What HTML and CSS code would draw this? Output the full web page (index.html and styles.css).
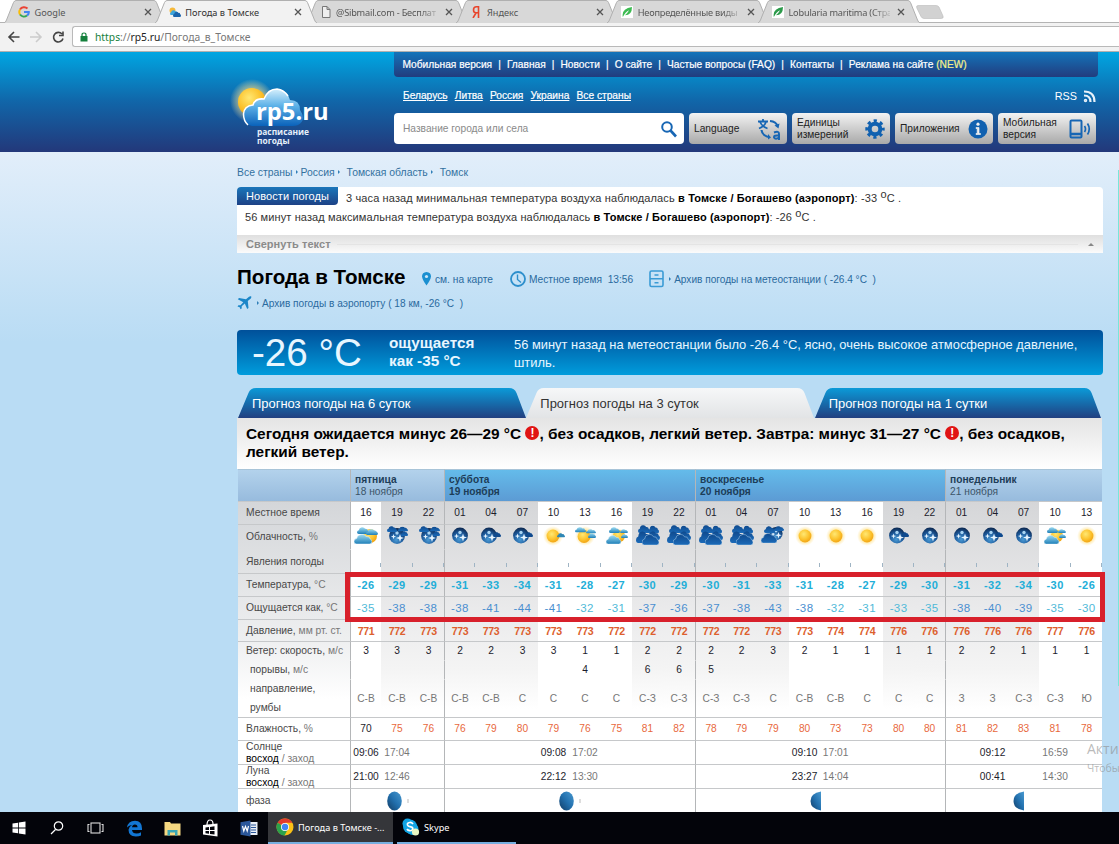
FILE: index.html
```html
<!DOCTYPE html>
<html lang="ru">
<head>
    <meta charset="UTF-8">
    <meta name="viewport" content="width=device-width, initial-scale=1.0">
    <title>Погода в Томске</title>
    <link rel="stylesheet" href="styles.css">
</head>
<body>

<!-- shared icon shapes -->
<svg class="defs" width="0" height="0">
    <defs>
        <radialGradient id="gSun" cx="0.4" cy="0.35" r="0.7"><stop offset="0" stop-color="#ffe873"/><stop offset="0.6" stop-color="#fcc22c"/><stop offset="1" stop-color="#f0a012"/></radialGradient>
        <radialGradient id="gHalo"><stop offset="0.55" stop-color="#ffdf80" stop-opacity="0.9"/><stop offset="1" stop-color="#ffe9a8" stop-opacity="0"/></radialGradient>
        <radialGradient id="gMoon" cx="0.45" cy="0.75" r="0.75"><stop offset="0" stop-color="#4a9ad4"/><stop offset="0.55" stop-color="#1d5a9c"/><stop offset="1" stop-color="#0c2850"/></radialGradient>
        <linearGradient id="gDay" x1="0" y1="0" x2="0" y2="1"><stop offset="0" stop-color="#9edcf2"/><stop offset="1" stop-color="#1f7fb8"/></linearGradient>
        <linearGradient id="gNight" x1="0" y1="0" x2="0" y2="1"><stop offset="0" stop-color="#0f4a8e"/><stop offset="1" stop-color="#1b6ab8"/></linearGradient>
        <linearGradient id="gPhase" x1="1" y1="0" x2="0" y2="1"><stop offset="0" stop-color="#4a9ad0"/><stop offset="0.5" stop-color="#2270ae"/><stop offset="1" stop-color="#123c64"/></linearGradient>
        <linearGradient id="gTab" x1="0" y1="0" x2="0" y2="1"><stop offset="0" stop-color="#0b9ad8"/><stop offset="1" stop-color="#213f80"/></linearGradient>
        <linearGradient id="gTabOn" x1="0" y1="0" x2="0" y2="1"><stop offset="0" stop-color="#f6f7f8"/><stop offset="1" stop-color="#e2e4e6"/></linearGradient>
    </defs>
    <symbol id="puff" viewBox="0 0 20 12" preserveAspectRatio="none"><path d="M3 12Q0 12 0 9Q0 6 3 5.500Q3.500 1 8 0.500Q12 0 13.500 3Q17.500 2.500 18 6Q20 7 20 9Q20 12 17 12Z"/></symbol>
    <symbol id="sun" viewBox="0 0 26 24"><circle cx="13" cy="12" r="10" fill="url(#gHalo)"/><circle cx="13" cy="12" r="6.400" fill="url(#gSun)"/></symbol>
    <symbol id="sun1" viewBox="0 0 26 24"><circle cx="12" cy="12" r="10" fill="url(#gHalo)"/><circle cx="12" cy="12" r="6.400" fill="url(#gSun)"/><use href="#puff" x="16" y="9" width="8" height="4.500" fill="#2f86b4"/></symbol>
    <symbol id="sun2" viewBox="0 0 26 24"><circle cx="13" cy="12" r="10" fill="url(#gHalo)"/><circle cx="12" cy="12.500" r="6.400" fill="url(#gSun)"/><use href="#puff" x="3" y="3" width="11" height="5.500" fill="url(#gDay)"/><use href="#puff" x="14" y="5" width="10" height="4.500" fill="url(#gDay)"/><use href="#puff" x="16" y="9" width="8" height="5" fill="url(#gDay)"/></symbol>
    <symbol id="sun3" viewBox="0 0 26 24"><circle cx="14" cy="12" r="8" fill="url(#gHalo)"/><circle cx="15" cy="12" r="6" fill="url(#gSun)"/><use href="#puff" x="5" y="3" width="11" height="6" fill="url(#gDay)"/><use href="#puff" x="16" y="5" width="8" height="4" fill="url(#gDay)"/><use href="#puff" x="17" y="10" width="7" height="4" fill="url(#gDay)"/><use href="#puff" x="2" y="11" width="15" height="9" fill="url(#gDay)" stroke="#e9f6fc" stroke-width="0.500"/></symbol>
    <symbol id="sun4" viewBox="0 0 26 24"><circle cx="17" cy="12" r="7" fill="url(#gSun)"/><use href="#puff" x="4" y="3" width="12" height="7" fill="url(#gDay)"/><use href="#puff" x="13" y="5" width="12" height="6" fill="url(#gDay)"/><use href="#puff" x="1" y="10" width="18" height="10" fill="url(#gDay)" stroke="#e9f6fc" stroke-width="0.600"/></symbol>
    <symbol id="moon" viewBox="0 0 26 24"><circle cx="13" cy="11.500" r="7.900" fill="url(#gMoon)"/><circle cx="13" cy="8.500" r="1.700" fill="#a9d4f2"/><path d="M16 9.500l1 3 3 1-3 1-1 3-1-3-3-1 3-1zM9.500 9.500l.7 1.900 1.900.7-1.900.7-.7 1.900-.7-1.900-1.900-.7 1.900-.7z" fill="#e8f5ff"/></symbol>
    <symbol id="moon1" viewBox="0 0 26 24"><use href="#moon" x="-2" width="26" height="24"/><use href="#puff" x="15.500" y="8" width="7.500" height="5" fill="#0f4a8e"/></symbol>
    <symbol id="moon3" viewBox="0 0 26 24"><use href="#moon" y="0.500" width="26" height="24"/><use href="#puff" x="3" y="2" width="10" height="6" fill="url(#gNight)"/><use href="#puff" x="14" y="2.500" width="10" height="5" fill="url(#gNight)"/><use href="#puff" x="17" y="7" width="7" height="5" fill="url(#gNight)"/></symbol>
    <symbol id="dark" viewBox="0 0 26 24"><g fill="url(#gNight)"><use href="#puff" x="3" y="1" width="12" height="8"/><use href="#puff" x="13" y="1.500" width="11" height="8"/><use href="#puff" x="12" y="7" width="13" height="9"/><use href="#puff" x="1" y="7" width="15" height="12"/><use href="#puff" x="7" y="10" width="17" height="11" stroke="#a9cdea" stroke-width="0.600"/></g></symbol>
    <symbol id="dark1" viewBox="0 0 26 24"><use href="#moon" x="5" width="22" height="20"/><g fill="url(#gNight)"><use href="#puff" x="4" y="2" width="11" height="7"/><use href="#puff" x="14" y="2" width="10" height="5"/><use href="#puff" x="1" y="9" width="16" height="10" stroke="#a9cdea" stroke-width="0.500"/></g></symbol>
    <symbol id="full" viewBox="0 0 28 20"><ellipse cx="10.500" cy="10" rx="7.300" ry="9.500" fill="url(#gPhase)"/><path d="M24 8v4" stroke="#aaa" stroke-width="0.800"/></symbol>
    <symbol id="half" viewBox="0 0 28 20"><path d="M14 0.500Q3.500 2 3.500 10Q3.500 18 14 19.500Z" fill="url(#gPhase)"/></symbol>
    <symbol id="leaf" viewBox="0 0 12 12"><path d="M1 12Q-1 2 12 0Q12 10 3.500 10Q7 7 8.500 4Q4 6 1 12Z"/></symbol>
    <symbol id="tab" viewBox="0 0 289 30" preserveAspectRatio="none"><path d="M0 30L10.500 5Q12.500 0 18 0H272Q277.500 0 279.500 5L289 30Z"/></symbol>
    <symbol id="ctab" viewBox="0 0 162 23" preserveAspectRatio="none"><path d="M0 23Q1.500 22.500 2.500 20L9.500 2.500Q10.500 .5 12 .5H150Q151.500 .5 152.500 2.500L159.500 20Q160.500 22.500 162 23" stroke="#b0b0b0"/></symbol>
    <symbol id="close" viewBox="0 0 8 8"><path d="M1 1l6 6M7 1L1 7" stroke="#555" stroke-width="1.300"/></symbol>
</svg>

<div class="tabstrip">
    <div class="ctab">
        <svg class="ctab-bg"><use href="#ctab"/></svg>
        <svg class="fav" viewBox="0 0 12 12" fill="none" stroke-width="2"><path d="M9.500 2.500A5 5 0 0 0 2 3.500" stroke="#ea4335"/><path d="M2 3.500A5 5 0 0 0 2 8.500" stroke="#fbbc05"/><path d="M2 8.500A5 5 0 0 0 9 9.500" stroke="#34a853"/><path d="M9 9.500Q11 8 10.800 6H6" stroke="#4285f4"/></svg>
        <span>Google</span><svg class="x"><use href="#close"/></svg>
    </div>
    <div class="ctab on">
        <svg class="ctab-bg"><use href="#ctab"/></svg>
        <svg class="fav" viewBox="0 0 12 12"><circle cx="3.500" cy="4.500" r="3" fill="#f6b93a"/><use href="#puff" x="1" y="4" width="8" height="5" fill="#3da5dc"/><use href="#puff" x="4" y="5.500" width="8" height="5.500" fill="#1a64ac"/></svg>
        <span>Погода в Томске</span><svg class="x"><use href="#close"/></svg>
    </div>
    <div class="ctab">
        <svg class="ctab-bg"><use href="#ctab"/></svg>
        <svg class="fav" viewBox="0 0 12 12"><path d="M2.500 .5H7L10 3.500V11.500H2.500ZM7 .5V3.500H10" fill="#eee" stroke="#777"/></svg>
        <span class="fade">@Sibmail.com - Бесплат</span><svg class="x"><use href="#close"/></svg>
    </div>
    <div class="ctab">
        <svg class="ctab-bg"><use href="#ctab"/></svg>
        <svg class="fav" viewBox="0 0 12 12"><path d="M8.500 12V.8H6.500Q3.500 .8 3.500 4Q3.500 6.800 6 6.800H8.500M6 7L3 12" fill="none" stroke="#e8452c" stroke-width="1.600"/></svg>
        <span>Яндекс</span><svg class="x"><use href="#close"/></svg>
    </div>
    <div class="ctab">
        <svg class="ctab-bg"><use href="#ctab"/></svg>
        <svg class="fav leaf" viewBox="0 0 12 12"><use href="#leaf" fill="#3dbb52" x="1" y="1" width="10" height="10"/></svg>
        <span class="fade">Неопределённые виды</span><svg class="x"><use href="#close"/></svg>
    </div>
    <div class="ctab">
        <svg class="ctab-bg"><use href="#ctab"/></svg>
        <svg class="fav leaf" viewBox="0 0 12 12"><use href="#leaf" fill="#2c9a4a" x="1" y="1" width="10" height="10"/></svg>
        <span class="fade">Lobularia maritima (Стра</span><svg class="x"><use href="#close"/></svg>
    </div>
    <svg class="newtab" viewBox="0 0 28 14"><path d="M2 .5H20Q22 .5 23 2L27 11Q28 13.500 25 13.500H8Q6 13.500 5 11.500L.8 3Q0 .5 2 .5Z" fill="#d2d2d2" stroke="#bbb" stroke-width="0.600"/></svg>
</div>

<div class="toolbar">
    <svg width="64" height="16" viewBox="0 0 64 16" fill="none" stroke-width="1.600"><path d="M13.500 8H3M8 3L3 8l5 5" stroke="#444"/><path d="M24 8h10.500M30 3l5 5-5 5" stroke="#ccc"/><path d="M56 5A4.800 4.800 0 1 0 57 9.500M57 2.500V6.500H53" stroke="#444"/></svg>
    <div class="address">
        <svg width="8" height="10" viewBox="0 0 8 10"><rect x="0.500" y="4" width="7" height="5.500" fill="#15803c"/><path d="M2 4.500V2.800Q2 1 4 1Q6 1 6 2.800V4.500" fill="none" stroke="#15803c" stroke-width="1.200"/></svg>
        <span><i class="secure">https</i>://<i class="host">rp5.ru</i>/Погода_в_Томске</span>
    </div>
</div>

<div class="site">
    <header class="header">
        <a class="logo">
            <svg width="104" height="74" viewBox="0 0 104 74">
                <defs>
                    <linearGradient id="gLogo" x1="0" y1="0" x2="0" y2="1"><stop offset="0" stop-color="#d5effc"/><stop offset="0.450" stop-color="#5eb2e8"/><stop offset="1" stop-color="#0a62ba"/></linearGradient>
                </defs>
                <circle cx="22" cy="23" r="22" fill="url(#gHalo)" opacity="0.700"/>
                <circle cx="22" cy="24" r="14" fill="url(#gSun)"/>
                <path d="M22 48Q14 46 13.500 37Q14 28 23 27Q25 20 34 21Q38 11 47 11Q57 12 60 22Q70 22 70 32Q77 42 68 47Q66 48 62 48Z" fill="url(#gLogo)"/>
                <path d="M18 47Q13.500 43 13.500 36Q14 28 23 27Q25 20 34 21Q38 11 47 11Q54 12 58 18" fill="none" stroke="#fff" stroke-width="1.500"/>
                <text x="26" y="42" class="logo-name">rp5.ru</text>
                <text x="27" y="57" class="logo-sub">расписание</text>
                <text x="27" y="66" class="logo-sub">погоды</text>
            </svg>
        </a>
        <div class="head-right">
            <nav class="topnav">
                <a>Мобильная версия</a><b>|</b><a>Главная</a><b>|</b><a>Новости</a><b>|</b><a>О сайте</a><b>|</b><a>Частые вопросы (FAQ)</a><b>|</b><a>Контакты</a><b>|</b><a>Реклама на сайте <em>(NEW)</em></a>
            </nav>
            <div class="countries">
                <a>Беларусь</a><a>Литва</a><a>Россия</a><a>Украина</a><a>Все страны</a>
                <div class="rss">RSS <svg width="13" height="13" viewBox="0 0 13 13" fill="none" stroke="#e9f2fa" stroke-width="2.200"><path d="M1 1.500Q11.500 1.500 11.500 12M1 5.500Q7.500 5.500 7.500 12"/><circle cx="2.500" cy="10.500" r="1" stroke-width="1.500"/></svg></div>
            </div>
            <div class="tools">
                <div class="search">
                    <span>Название города или села</span>
                    <svg width="18" height="18" viewBox="0 0 18 18" fill="none" stroke="#1766b4"><circle cx="7" cy="7" r="4.800" stroke-width="2"/><path d="M10.500 10.500L16 16.500" stroke-width="2.600"/></svg>
                </div>
                <a class="tool">Language<svg width="25" height="24" viewBox="0 0 25 24" fill="none" stroke="#1766b4" stroke-width="1.800"><path d="M1 4.500H11M6 2V4.500M2 11.500Q8 9 9 5M3 5Q5 9.500 10.500 11.500"/><path d="M13 4Q19 4.500 20.500 9M4.500 13Q5 18 11 20" stroke-width="2.200"/><path d="M17.500 8.500L22.500 6.500L21.500 11.500ZM11 17V22.500L14 20.500Z" fill="#1766b4" stroke="none"/><path d="M17 15.500Q22 13.500 22 17V23M22 18.500Q16.500 18 17 20.500Q18.500 23 22 20.500" stroke-width="2"/></svg></a>
                <a class="tool">Единицы<br>измерений<svg width="20" height="20" viewBox="0 0 20 20" fill="none" stroke="#1161b0"><circle cx="10" cy="10" r="5.300" stroke-width="4"/><circle cx="10" cy="10" r="8.200" stroke-width="3" stroke-dasharray="3.200 3.240" stroke-dashoffset="1.600"/></svg></a>
                <a class="tool">Приложения<svg width="20" height="20" viewBox="0 0 20 20"><circle cx="10" cy="10" r="9.500" fill="#1161b0"/><circle cx="10" cy="5.200" r="1.600" fill="#eee"/><path d="M8 8.500H11V14.500H12.500V15.500H8V14.500H9.200V9.500H8Z" fill="#eee" stroke="#eee" stroke-width="0.700"/></svg></a>
                <a class="tool">Мобильная<br>версия<svg width="22" height="20" viewBox="0 0 22 20" fill="none" stroke="#1766b4" stroke-width="2"><rect x="1.500" y="1.500" width="11" height="17" rx="1"/><path d="M1.500 15H12.500" stroke-width="2.500"/><path d="M15.500 7Q17.500 10 15.500 13M18.500 4.500Q22 10 18.500 15.500" stroke-width="1.700"/></svg></a>
            </div>
        </div>
    </header>

    <main class="content">
        <div class="crumbs"><a>Все страны</a><i></i><a>Россия</a><i></i><a class="gap">Томская область</a><i></i><a class="gap">Томск</a></div>

        <section class="news">
            <h3>Новости погоды</h3>
            <p class="first">3 часа назад минимальная температура воздуха наблюдалась <strong>в Томске / Богашево (аэропорт)</strong>: -33 <sup>o</sup>C .</p>
            <p>56 минут назад максимальная температура воздуха наблюдалась <strong>в Томске / Богашево (аэропорт)</strong>: -26 <sup>o</sup>C .</p>
            <div class="collapse"><span>Свернуть текст</span><hr><i></i></div>
        </section>

        <div class="title-row">
            <h1>Погода в Томске</h1>
            <a class="map"><svg width="9" height="14" viewBox="0 0 9 14"><path d="M4.500 0Q9 .3 9 4.500Q8.500 8 4.500 13.500Q.5 8 0 4.500Q0 .3 4.500 0Z" fill="#1a8fd0"/><circle cx="4.500" cy="4.500" r="1.600" fill="#cde6f7"/></svg>см. на карте</a>
            <a class="time"><svg width="16" height="16" viewBox="0 0 16 16" fill="none" stroke="#2d8fcc" stroke-width="1.800"><circle cx="8" cy="8" r="7"/><path d="M7.500 3.500V8.500L11 11.500" stroke-width="1.400"/></svg>Местное время&nbsp; 13:56</a>
            <a class="archive"><svg width="15" height="18" viewBox="0 0 15 18" fill="none" stroke="#3a9bd5" stroke-width="1.600"><rect x="1" y="1" width="13" height="15.500" rx="1.500"/><path d="M1 8.700H14M5.500 5h4M5.500 12.700h4"/></svg><i></i>Архив погоды на метеостанции ( -26.4 °C&nbsp; )</a>
        </div>
        <div class="airport">
            <svg width="15" height="14" viewBox="0 0 15 14" fill="#1b86c8"><path d="M14 .3Q15 .8 13.800 2.500L10.800 5L11.500 12L10.200 13L7.800 7.500L4.700 10.200L4.700 12.500L3.500 13.200L2.700 11.200L.5 10.500L1.400 9.300L3.500 9.200L6.300 6.300L.8 3.200L2 2L9 3.200L12 .7Q13 0 14 .3Z"/></svg><i></i><a>Архив погоды в аэропорту ( 18 км, -26 °C&nbsp; )</a>
        </div>

        <section class="current">
            <div class="temp">-26 °C</div>
            <div class="feels">ощущается<br>как -35 °C</div>
            <p>56 минут назад на метеостанции было -26.4 °C, ясно, очень высокое атмосферное давление, штиль.</p>
        </section>

        <div class="ftabs">
            <div class="ftab"><svg fill="url(#gTab)"><use href="#tab"/></svg><span>Прогноз погоды на 6 суток</span></div>
            <div class="ftab on"><svg fill="url(#gTabOn)"><use href="#tab"/></svg><span>Прогноз погоды на 3 суток</span></div>
            <div class="ftab"><svg fill="url(#gTab)"><use href="#tab"/></svg><span>Прогноз погоды на 1 сутки</span></div>
        </div>
        <div class="summary">Сегодня ожидается минус 26—29 °C <b class="warn">!</b>, без осадков, легкий ветер. Завтра: минус 31—27 °C <b class="warn">!</b>, без осадков, легкий ветер.</div>

        <table class="forecast">
            <colgroup>
                <col class="label">
                <col><col class="night w"><col class="night">
                <col class="night"><col class="night w"><col class="night">
                <col><col class="w"><col>
                <col class="night"><col class="night w"><col class="night">
                <col class="night"><col class="night w"><col>
                <col><col class="w"><col class="night">
                <col class="night"><col class="night w"><col class="night">
                <col class="night"><col class="w"><col>
            </colgroup>
            <tr class="days"><th></th><td colspan="3" class="d"><b>пятница</b><br>18 ноября</td><td colspan="8" class="d weekend"><b>суббота</b><br><b>19 ноября</b></td><td colspan="8" class="d weekend"><b>воскресенье</b><br><b>20 ноября</b></td><td colspan="5" class="d"><b>понедельник</b><br>21 ноября</td></tr>
            <tr class="hours"><th>Местное время</th><td class="d">16</td><td>19</td><td>22</td><td class="d">01</td><td>04</td><td>07</td><td>10</td><td>13</td><td>16</td><td>19</td><td>22</td><td class="d">01</td><td>04</td><td>07</td><td>10</td><td>13</td><td>16</td><td>19</td><td>22</td><td class="d">01</td><td>04</td><td>07</td><td>10</td><td>13</td></tr>
            <tr class="clouds"><th>Облачность, <i>%</i></th><td class="d"><svg><use href="#sun4"/></svg></td><td><svg><use href="#moon3"/></svg></td><td><svg><use href="#moon3"/></svg></td><td class="d"><svg><use href="#moon"/></svg></td><td><svg><use href="#moon1"/></svg></td><td><svg><use href="#moon1"/></svg></td><td><svg><use href="#sun1"/></svg></td><td><svg><use href="#sun2"/></svg></td><td><svg><use href="#sun3"/></svg></td><td><svg><use href="#dark"/></svg></td><td><svg><use href="#dark"/></svg></td><td class="d"><svg><use href="#dark"/></svg></td><td><svg><use href="#dark"/></svg></td><td><svg><use href="#dark1"/></svg></td><td><svg><use href="#sun"/></svg></td><td><svg><use href="#sun"/></svg></td><td><svg><use href="#sun"/></svg></td><td><svg><use href="#moon1"/></svg></td><td><svg><use href="#moon"/></svg></td><td class="d"><svg><use href="#moon"/></svg></td><td><svg><use href="#moon1"/></svg></td><td><svg><use href="#moon"/></svg></td><td><svg><use href="#sun3"/></svg></td><td><svg><use href="#sun"/></svg></td></tr>
            <tr class="events"><th>Явления погоды</th><td class="d"></td><td></td><td></td><td class="d"></td><td></td><td></td><td></td><td></td><td></td><td></td><td></td><td class="d"></td><td></td><td></td><td></td><td></td><td></td><td></td><td></td><td class="d"></td><td></td><td></td><td></td><td></td></tr>
            <tr class="temps"><th>Температура, <i>°C</i></th><td class="d">-26</td><td>-29</td><td>-29</td><td class="d">-31</td><td>-33</td><td>-34</td><td>-31</td><td>-28</td><td>-27</td><td>-30</td><td>-29</td><td class="d">-30</td><td>-31</td><td>-33</td><td>-31</td><td>-28</td><td>-27</td><td>-29</td><td>-30</td><td class="d">-31</td><td>-32</td><td>-34</td><td>-30</td><td>-26</td></tr>
            <tr class="feel"><th>Ощущается как, <i>°C</i></th><td class="d">-35</td><td class="c">-38</td><td class="c">-38</td><td class="d c">-38</td><td class="c">-41</td><td class="c">-44</td><td class="c">-41</td><td>-32</td><td>-31</td><td class="c">-37</td><td class="c">-36</td><td class="d c">-37</td><td class="c">-38</td><td class="c">-43</td><td class="c">-38</td><td>-32</td><td>-31</td><td>-33</td><td>-35</td><td class="d c">-38</td><td class="c">-40</td><td class="c">-39</td><td>-35</td><td>-30</td></tr>
            <tr class="pressure"><th>Давление, <i>мм рт. ст.</i></th><td class="d">771</td><td>772</td><td>773</td><td class="d">773</td><td>773</td><td>773</td><td>773</td><td>773</td><td>772</td><td>772</td><td>772</td><td class="d">772</td><td>772</td><td>773</td><td>773</td><td>774</td><td>774</td><td>776</td><td>776</td><td class="d">776</td><td>776</td><td>776</td><td>777</td><td>776</td></tr>
            <tr class="wind"><th>Ветер: скорость, <i>м/с</i></th><td class="d">3</td><td>3</td><td>3</td><td class="d">2</td><td>2</td><td>3</td><td>3</td><td>1</td><td>1</td><td>2</td><td>2</td><td class="d">2</td><td>2</td><td>3</td><td>2</td><td>1</td><td>1</td><td>1</td><td>1</td><td class="d">2</td><td>2</td><td>1</td><td>1</td><td>1</td></tr>
            <tr class="wind sub"><th>порывы, <i>м/с</i></th><td class="d"></td><td></td><td></td><td class="d"></td><td></td><td></td><td></td><td>4</td><td></td><td>6</td><td>6</td><td class="d">5</td><td></td><td></td><td></td><td></td><td></td><td></td><td></td><td class="d"></td><td></td><td></td><td></td><td></td></tr>
            <tr class="dir sub"><th>направление,<br>румбы</th><td class="d">С-В</td><td>С-В</td><td>С-В</td><td class="d">С-В</td><td>С-В</td><td>С</td><td>С</td><td>С</td><td>С</td><td>С-З</td><td>С-З</td><td class="d">С-З</td><td>С-З</td><td>С</td><td>С-В</td><td>С-В</td><td>С</td><td>С</td><td>С</td><td class="d">З</td><td>З</td><td>С-З</td><td>С-З</td><td>Ю</td></tr>
            <tr class="humidity"><th>Влажность, <i>%</i></th><td class="d ok">70</td><td>75</td><td>76</td><td class="d">76</td><td>79</td><td>80</td><td>79</td><td>76</td><td>75</td><td>81</td><td>82</td><td class="d">78</td><td>79</td><td>79</td><td>80</td><td>73</td><td>73</td><td>80</td><td>80</td><td class="d">81</td><td>82</td><td>83</td><td>81</td><td>78</td></tr>
            <tr class="rise"><th>Солнце<br><b>восход</b> <i>/ заход</i></th><td class="d">09:06</td><td class="set">17:04</td><td></td><td class="d" colspan="3"></td><td>09:08</td><td class="set">17:02</td><td colspan="3"></td><td class="d" colspan="3"></td><td>09:10</td><td class="set">17:01</td><td colspan="3"></td><td class="d"></td><td>09:12</td><td></td><td class="set">16:59</td><td></td></tr>
            <tr class="rise"><th>Луна<br><b>восход</b> <i>/ заход</i></th><td class="d">21:00</td><td class="set">12:46</td><td></td><td class="d" colspan="3"></td><td>22:12</td><td class="set">13:30</td><td colspan="3"></td><td class="d" colspan="3"></td><td>23:27</td><td class="set">14:04</td><td colspan="3"></td><td class="d"></td><td>00:41</td><td></td><td class="set">14:30</td><td></td></tr>
            <tr class="phase"><th>фаза</th><td class="d" colspan="3"><svg><use href="#full"/></svg></td><td class="d" colspan="8"><svg><use href="#full"/></svg></td><td class="d" colspan="8"><svg><use href="#half"/></svg></td><td class="d" colspan="5"><svg><use href="#half"/></svg></td></tr>
        </table>
    </main>
    <div class="mark"></div>
    <div class="activate">Акти<br><small>Чтобы</small></div>
    <div class="edge"></div>
</div>

<footer class="taskbar">
    <div class="item"><svg width="14" height="14" viewBox="0 0 14 14" fill="#fff"><path d="M.5 2.500L6 1.700V6.600H.5ZM6.800 1.600L13.500.6V6.600H6.800ZM.5 7.400H6V12.300L.5 11.500ZM6.800 7.400H13.500V13.400L6.800 12.400Z"/></svg></div>
    <div class="item"><svg width="14" height="14" viewBox="0 0 14 14" fill="none" stroke="#fff" stroke-width="1.200"><circle cx="8.500" cy="5" r="4.200"/><path d="M5.500 8.500L1 13"/></svg></div>
    <div class="item"><svg width="17" height="12" viewBox="0 0 17 12" fill="none" stroke="#ddd" stroke-width="1.100"><rect x="4" y="1" width="9" height="10"/><path d="M2.500 2.500H1V9.500H2.500M14.500 2.500H16V9.500H14.500"/></svg></div>
    <div class="item"><svg width="17" height="17" viewBox="0 0 17 17"><path d="M1 7.500Q2 1 9 .8Q16 1 16 8.500V10H6Q6.500 13.500 10.500 13.500Q13 13.500 15 12.300V15.500Q13 16.600 9.800 16.600Q2.500 16 2.500 9.800Q3 6.500 6 5Q3 5.200 1 7.500ZM6 7.300H11.500Q11.500 4.500 8.900 4.500Q6.500 4.500 6 7.300Z" fill="#1276d2"/></svg></div>
    <div class="item"><svg width="17" height="15" viewBox="0 0 17 15"><path d="M.5 1H6L7 2.500H16.500V14.500H.5Z" fill="#f5d882"/><path d="M3.500 14.500V9H13.500V14.500H11V11.500H6V14.500Z" fill="#3aa7b5"/></svg></div>
    <div class="item"><svg width="17" height="18" viewBox="0 0 17 18"><path d="M1 6L15.500 4.500V17.500L1 15.500Z" fill="#fff"/><path d="M5 6Q5 1 8 1Q11 1 11 5" fill="none" stroke="#fff" stroke-width="1.200"/><path d="M3.500 8.500L7 8V11H3.500ZM8 7.900L12.500 7.300V11H8ZM3.500 12H7V14.800L3.500 14.300ZM8 12H12.500V15.500L8 15Z" fill="#05060c"/></svg></div>
    <div class="item"><svg width="18" height="17" viewBox="0 0 18 17"><rect x="8" y="2" width="9.500" height="13" fill="#e8eef6"/><path d="M11 5H16M11 7.500H16M11 10H16M11 12.500H16" stroke="#2b579a"/><path d="M.5 2.200L10.500.5V16.500L.5 14.800Z" fill="#2b579a"/><path d="M2.500 6L3.800 11L5.500 6.500L7.200 11L8.500 6" fill="none" stroke="#fff" stroke-width="1.200"/></svg></div>
    <div class="app on"><svg width="18" height="18" viewBox="0 0 18 18"><circle cx="9" cy="9" r="8.500" fill="#fbc116"/><path d="M9 9L1.600 4.700A8.500 8.500 0 0 1 16.400 4.700H9Z" fill="#e33b2e"/><path d="M9 9L1.600 4.700A8.500 8.500 0 0 0 8.500 17.500L12 11Z" fill="#2ba24c"/><circle cx="9" cy="9" r="4" fill="#fff"/><circle cx="9" cy="9" r="3.200" fill="#4285f4"/></svg><span>Погода в Томске -...</span></div>
    <div class="app skype"><svg width="18" height="18" viewBox="0 0 18 18"><circle cx="5.500" cy="5.500" r="5" fill="#12a5e5"/><circle cx="10.500" cy="11" r="6" fill="#12a5e5"/><circle cx="8" cy="8.500" r="7" fill="#12a5e5"/><path d="M11 6Q9.500 4 7.500 4.500Q5 5 5.500 7Q6 8.300 8 8.600Q11 9 10.800 11Q10 13 7.800 12.700Q5.800 12.500 5 11" fill="none" stroke="#fff" stroke-width="1.700"/><circle cx="13.500" cy="14" r="3.600" fill="#e9f7c4"/></svg><span>Skype</span></div>
</footer>

</body>
</html>
```
FILE: styles.css
```css
* {
    box-sizing: border-box;
}
body {
    margin: 0;
    width: 1119px;
    height: 844px;
    overflow: hidden;
    display: flex;
    flex-direction: column;
    background: #fff;
    font-family: "Liberation Sans", Arial, sans-serif;
    font-size: 10.2px;
    color: #333;
}
svg {
    display: block;
    flex: none;
}
i, em {
    font-style: normal;
}
.defs {
    position: absolute;
}

/* browser window */
.tabstrip {
    height: 23px;
    flex: none;
    display: flex;
    padding-left: 4px;
    border-bottom: 1px solid #b4b4b4;
    font-family: "Noto Sans", "Open Sans", sans-serif;
    font-size: 9.2px;
    color: #555;
}
.ctab {
    position: relative;
    width: 150.8px;
    height: 23px;
    display: flex;
    align-items: center;
    padding: 1px 0 0 14px;
}
.ctab-bg {
    position: absolute;
    left: 0;
    top: 0;
    width: 162px;
    height: 23px;
    fill: #d8d8d8;
}
.ctab.on {
    z-index: 1;
    color: #333;
}
.ctab.on .ctab-bg {
    fill: #f2f2f2;
}
.fav {
    position: relative;
    width: 12px;
    height: 12px;
}
.leaf {
    background: #fff;
}
.ctab span {
    position: relative;
    width: 102px;
    margin-left: 4.5px;
    white-space: nowrap;
}
.ctab .fade {
    letter-spacing: -0.2px;
    -webkit-mask-image: linear-gradient(90deg, #000 82%, rgba(0, 0, 0, 0.2));
    mask-image: linear-gradient(90deg, #000 82%, rgba(0, 0, 0, 0.2));
}
.x {
    position: relative;
    width: 8px;
    height: 8px;
    margin-left: 7px;
}
.newtab {
    width: 28px;
    height: 14px;
    margin: 5px 0 0 7px;
}
.toolbar {
    height: 29px;
    flex: none;
    display: flex;
    align-items: center;
    padding: 0 0 1px 6px;
    background: #f2f2f2;
    border-bottom: 1px solid #b0b0b0;
}
.address {
    flex: 1;
    height: 21px;
    margin-left: 2px;
    padding-left: 7px;
    display: flex;
    align-items: center;
    gap: 7px;
    background: #fff;
    border: 1px solid #b9b9b9;
    border-right: 0;
    border-radius: 3px 0 0 3px;
    font-family: "Noto Sans", "Open Sans", sans-serif;
    font-size: 10.3px;
    color: #777;
}
.secure {
    color: #15803c;
}
.host {
    color: #222;
}

/* site header */
.site {
    position: relative;
    height: 760px;
    flex: none;
    overflow: hidden;
    background: linear-gradient(#e2eefa 100px, #b9dcf4 290px);
}
.header {
    height: 100px;
    display: flex;
    background: linear-gradient(#00a6e2, #1165a8 50%, #23387a);
}
.logo {
    width: 394px;
    padding: 26px 0 0 230px;
}
.logo-name {
    font: bold 23.8px "Open Sans", sans-serif;
    fill: #fff;
}
.logo-sub {
    font: bold 8.4px "Open Sans", sans-serif;
    fill: #e6f0fa;
}
.head-right {
    width: 704px;
    color: #fff;
}
.topnav {
    height: 25px;
    display: flex;
    align-items: center;
    padding-left: 8.5px;
    background: linear-gradient(#1374ba, #223c7e);
    border-radius: 0 0 4px 4px;
    -webkit-text-stroke: 0.2px;
}
.topnav b {
    width: 14.8px;
    text-align: center;
    font-weight: normal;
}
.topnav em {
    color: #f4f08a;
}
.countries {
    height: 36px;
    display: flex;
    align-items: center;
    gap: 7.2px;
    padding: 0 2px 0 9px;
    -webkit-text-stroke: 0.2px;
}
.countries a {
    text-decoration: underline;
}
.rss {
    margin-left: auto;
    display: flex;
    align-items: center;
    gap: 6px;
    padding-top: 2px;
    font-size: 10.8px;
    -webkit-text-stroke: 0;
}
.tools {
    display: flex;
    gap: 5px;
}
.search {
    width: 290px;
    height: 31px;
    display: flex;
    align-items: center;
    justify-content: space-between;
    padding: 0 6px 0 9px;
    background: #fff;
    border-radius: 4px;
    color: #8a8a8a;
}
.tool {
    width: 98px;
    height: 31px;
    display: grid;
    grid-template-columns: 1fr auto;
    align-items: center;
    padding: 0 5px;
    line-height: 11.5px;
    background: linear-gradient(#f3f3f3, #a9a9a9);
    border-radius: 4px;
    color: #222;
}
.tool svg {
    grid-column: 2;
}

/* page content */
.content {
    width: 866px;
    margin-left: 237px;
}
.crumbs {
    height: 35px;
    padding-top: 5px;
    display: flex;
    align-items: center;
    color: #33719f;
    font-size: 10.4px;
}
.crumbs i, .title-row i, .airport i {
    margin: 0 3px;
    border: 2px solid transparent;
    border-left: 2.500px solid #2f7fb8;
    border-right: 0;
}
.title-row i, .airport i {
    margin: 0 3px 0 5px;
}
.gap {
    margin-left: 4px;
}
.news {
    height: 66px;
    background: #fff;
    border-radius: 4px 4px 0 0;
    font-size: 11px;
    letter-spacing: 0.11px;
}
.news h3 {
    float: left;
    width: 101px;
    height: 18px;
    margin: 0 8px 0 0;
    text-align: center;
    font-size: 11px;
    font-weight: normal;
    line-height: 18px;
    letter-spacing: 0.1px;
    color: #fff;
    background: linear-gradient(#1a76ba, #1d4286);
    border-radius: 4px 0 4px 0;
}
.news p {
    margin: 0 0 0 8px;
    height: 19px;
    line-height: 19px;
    white-space: nowrap;
}
.news .first {
    height: 21px;
    line-height: 23px;
    margin: 0;
    letter-spacing: 0.13px;
}
.news strong {
    color: #000;
}
.news sup {
    font-size: 11px;
    line-height: 0;
    vertical-align: 4px;
}
.collapse {
    height: 18px;
    margin-top: 8px;
    display: flex;
    align-items: center;
    padding: 0 9px;
    background: linear-gradient(#dfdfdf, #fbfbfb);
    font-weight: bold;
    letter-spacing: 0.05px;
    color: #8b8b8b;
}
.collapse hr {
    flex: 1;
    margin: 0 10px 0 6px;
    border: 0;
    border-top: 1px solid #e4e4e4;
}
.collapse i {
    border: 3px solid transparent;
    border-bottom: 3px solid #888;
    border-top: 0;
}
.title-row {
    height: 39px;
    padding-top: 13px;
    display: flex;
    align-items: center;
    color: #2a6a9e;
    white-space: nowrap;
}
h1 {
    width: 185px;
    margin: -5px 0 0;
    font-size: 20.6px;
    color: #000;
}
.title-row a {
    display: flex;
    align-items: center;
}
.map svg {
    margin-right: 4px;
}
.time {
    margin-left: 17px;
}
.time svg {
    margin-right: 3px;
}
.archive {
    margin-left: 16px;
}
.archive, .airport {
    font-size: 10.1px;
}
.airport {
    height: 20px;
    padding-top: 2px;
    display: flex;
    align-items: center;
    color: #2a6a9e;
}
.current {
    height: 45px;
    margin-top: 18px;
    display: flex;
    padding-left: 15px;
    background: linear-gradient(#00509a, #009cdc);
    border-radius: 4px;
    color: #e8f6ff;
}
.temp {
    width: 137px;
    font-size: 38.6px;
    line-height: 45px;
    white-space: nowrap;
}
.feels {
    width: 125px;
    padding-top: 4px;
    font-size: 15.3px;
    font-weight: bold;
    line-height: 18px;
}
.current p {
    margin: 0;
    padding-top: 6px;
    width: 580px;
    font-size: 12.9px;
    line-height: 17.5px;
}
.ftabs {
    height: 30px;
    margin: 13px 0 0 1px;
    display: flex;
}
.ftab {
    position: relative;
    width: 289px;
    padding-left: 14px;
    line-height: 31px;
    font-size: 12.95px;
    color: #fff;
}
.ftab.on {
    color: #333;
}
.ftab svg {
    position: absolute;
    left: 0;
    top: 0;
    width: 288px;
    height: 30px;
}
.ftab:last-child svg {
    width: 286px;
}
.ftab span {
    position: relative;
}
.summary {
    height: 51px;
    width: 865px;
    padding: 7px 9px 0;
    background: linear-gradient(#e4e4e4, #fff);
    font-size: 15.4px;
    font-weight: bold;
    line-height: 18px;
    color: #000;
}
.warn {
    display: inline-block;
    width: 14px;
    height: 14px;
    border-radius: 50%;
    background: #e01414;
    color: #fff;
    font-size: 12px;
    line-height: 14px;
    text-align: center;
    vertical-align: 2px;
}

/* forecast table */
.forecast {
    width: 864px;
    margin-left: 1px;
    table-layout: fixed;
    border-spacing: 0;
    background: #fff;
    line-height: 12px;
    color: #1c1c2c;
}
col {
    width: 31px;
}
.w {
    width: 32px;
}
col.label {
    width: 112px;
    background: linear-gradient(#d4d6d9 32px, #eeeff0 170px, #fff 230px);
}
.night {
    background: linear-gradient(#d5d6d8 32px, #ececed 150px, #f4f4f4 200px, #fff 240px);
}
.forecast th,
.forecast td {
    padding: 0;
    border-bottom: 1px solid #c6c8ca;
    text-align: center;
    white-space: nowrap;
}
.forecast th {
    padding-left: 8px;
    text-align: left;
    font-weight: normal;
    font-size: 10.3px;
    color: #484848;
}
.forecast th i {
    color: #777;
}
.forecast .d {
    border-left: 1px solid #b4b6b8;
}
.days th, .days td {
    height: 33px;
    border-top: 1px solid #a8c4d8;
    background: linear-gradient(#b3d2ec, #97bbdd);
}
.days .d {
    padding-left: 4px;
    text-align: left;
    color: #3c5468;
}
.days .weekend {
    background: linear-gradient(#64bbea, #5c9bd4);
}
.days b {
    color: #1d3d58;
}
.hours td { height: 23px; }
.clouds td, .clouds th, .wind td, .wind th {
    border-bottom-color: transparent;
}
.clouds td { height: 25px; }
.clouds svg {
    width: 26px;
    height: 24px;
    margin: -2px auto 0;
}
.events td {
    height: 24px;
    background: linear-gradient(#9fb4c4, #9fb4c4) right 13px / 1px 4px no-repeat;
}
.temps td {
    height: 23px;
    font-size: 11px;
    font-weight: bold;
    letter-spacing: 0.5px;
    color: #22aed8;
}
.feel td {
    height: 23px;
    font-size: 11.5px;
    letter-spacing: 0.4px;
    color: #4fb9d8;
}
.feel .c {
    color: #4a8fd0;
}
.pressure td {
    height: 22px;
    font-weight: bold;
    font-size: 10.6px;
    letter-spacing: -0.4px;
    color: #dd5f2e;
}
.wind td { height: 19px; }
.forecast .sub th {
    padding-left: 12px;
}
.dir td {
    height: 38px;
    color: #777;
}
.dir th {
    line-height: 18.5px;
}
.humidity td {
    height: 23px;
    color: #e8683c;
}
.humidity .ok {
    color: #1c1c2c;
}
.rise td { height: 24px; }
.rise th {
    line-height: 11.5px;
}
.forecast .set {
    color: #777;
}
.rise b {
    font-weight: normal;
    color: #000;
}
.phase td { height: 24px; }
.phase svg {
    width: 28px;
    height: 20px;
    margin: 0 auto;
}

/* overlays above the page */
.mark {
    position: absolute;
    left: 345px;
    top: 520px;
    width: 760px;
    height: 50px;
    border: 5px solid #d8202b;
}
.activate {
    position: absolute;
    left: 1087px;
    top: 688px;
    font: 14px/18px "Open Sans", sans-serif;
    color: rgba(140, 140, 140, 0.6);
}
.activate small {
    font-size: 10.5px;
}
.edge {
    position: absolute;
    right: 0;
    top: 118px;
    width: 1px;
    height: 516px;
    background: #78e6d8;
}

/* windows taskbar */
.taskbar {
    height: 32px;
    flex: none;
    display: flex;
    background: #03040a;
    font-family: "Noto Sans", "Open Sans", sans-serif;
    font-size: 9.2px;
    color: #fff;
}
.item {
    width: 38.3px;
    display: flex;
    align-items: center;
    justify-content: center;
}
.app {
    width: 125px;
    display: flex;
    align-items: center;
    gap: 4px;
    padding-left: 8px;
    border-bottom: 2px solid #76afe0;
}
.app.on {
    background: #35363a;
}
.skype {
    width: 119px;
    margin-left: 4px;
    padding-left: 5px;
}
```
